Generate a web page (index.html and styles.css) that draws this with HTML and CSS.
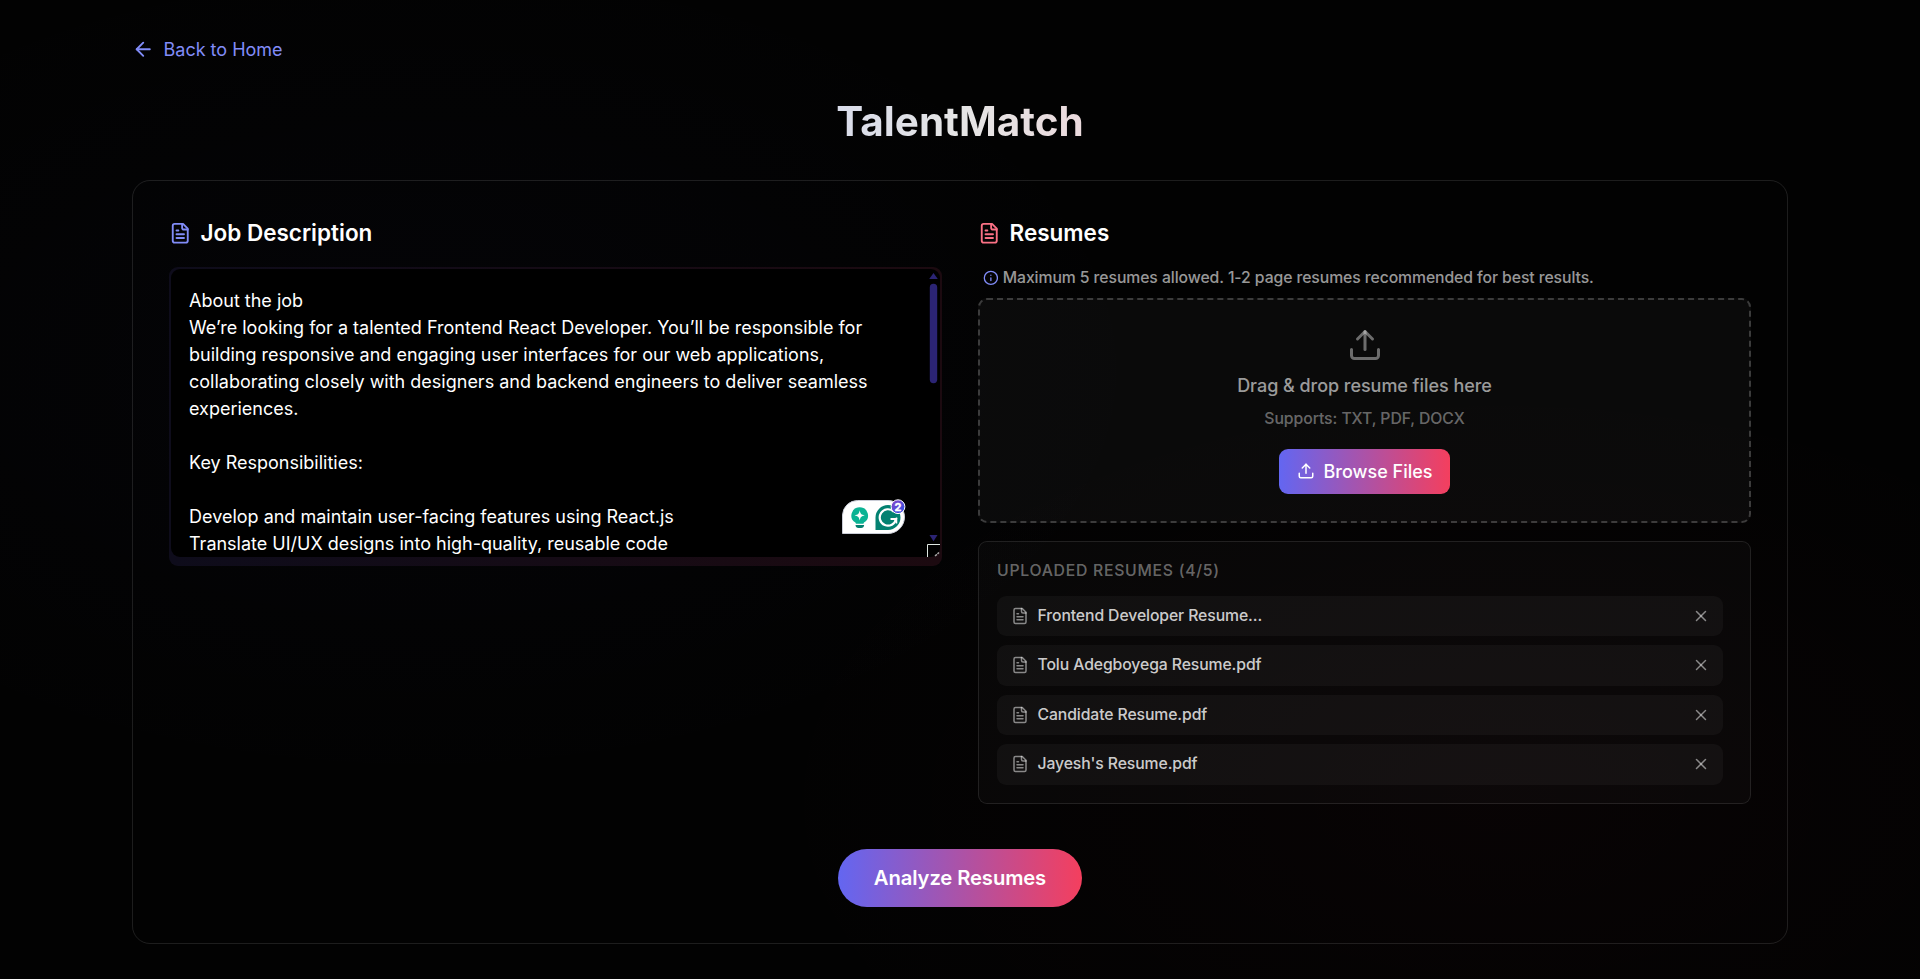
FILE: index.html
```html
<!DOCTYPE html>
<html lang="en">
<head>
<meta charset="utf-8">
<title>TalentMatch</title>
<link rel="stylesheet" href="styles.css">
</head>
<body>
<svg class="defs" width="0" height="0" aria-hidden="true">
  <symbol id="file" viewBox="0 0 24 24"><path d="M15 2H6a2 2 0 0 0-2 2v16a2 2 0 0 0 2 2h12a2 2 0 0 0 2-2V7Z"/><path d="M14 2v4a2 2 0 0 0 2 2h4"/><path d="M10 9H8"/><path d="M16 13H8"/><path d="M16 17H8"/></symbol>
  <symbol id="upload" viewBox="0 0 24 24"><path d="M21 15v4a2 2 0 0 1-2 2H5a2 2 0 0 1-2-2v-4"/><path d="m17 8-5-5-5 5"/><path d="M12 3v12"/></symbol>
  <symbol id="close" viewBox="0 0 24 24"><path d="M18 6 6 18"/><path d="m6 6 12 12"/></symbol>
</svg>
<main class="page">
  <a class="back"><svg class="icon icon-md" viewBox="0 0 24 24"><path d="m12 19-7-7 7-7"/><path d="M19 12H5"/></svg><span>Back to Home</span></a>
  <h1 class="title"><span>TalentMatch</span></h1>
  <section class="card">
    <div class="columns">
      <div class="column">
        <h2 class="heading"><svg class="icon icon-md indigo"><use href="#file"/></svg>Job Description</h2>
        <div class="editor">
          <div class="editor-text">About the job
We’re looking for a talented Frontend React Developer. You’ll be responsible for
building responsive and engaging user interfaces for our web applications,
collaborating closely with designers and backend engineers to deliver seamless
experiences.

Key Responsibilities:

Develop and maintain user-facing features using React.js
Translate UI/UX designs into high-quality, reusable code</div>
          <svg class="scrollbar" width="13" height="288" viewBox="0 0 13 288">
            <path class="bar" d="M2.200 10 6.500 4l4.300 6z"/>
            <rect class="bar" x="2.800" y="14.800" width="7.400" height="99.400" rx="3.700"/>
            <path class="bar" d="M2.500 266h8l-4 6.300z"/>
            <path class="corner" d="M.500 288V275.500H13"/>
            <path class="grip" d="m8 287 4-3.500"/>
          </svg>
          <svg class="assistant" width="66" height="38" viewBox="0 0 66 38">
            <defs><linearGradient id="badge" x1="0" y1="0" x2="1" y2="1"><stop offset="0" stop-color="#8f45c8"/><stop offset="1" stop-color="#2351e5"/></linearGradient></defs>
            <path d="M.500 35.500V17A15 15 0 0 1 15.500 2.500H46A16 16 0 0 1 46 35.500Z" fill="#fff" stroke="#c9ccd6"/>
            <path d="M17.700 9.200a8.300 8.300 0 0 0-4.300 15.400l.6 1.200h7.400l.6-1.200A8.300 8.300 0 0 0 17.700 9.200Z" fill="#0bb394"/>
            <path d="M13.500 27h8.600c0 2-1.300 2.900-3 2.900h-2.600c-1.700 0-3-.9-3-2.900Z" fill="#037f6f"/>
            <path d="M17.700 12.300c.7 3.600 1.500 4.400 5.100 5.100-3.600.7-4.400 1.500-5.100 5.100-.7-3.600-1.500-4.400-5.100-5.100 3.600-.7 4.400-1.500 5.100-5.100Z" fill="#fff"/>
            <path d="M33.500 32V19.500A12.500 12.500 0 1 1 46 32Z" fill="#038171"/>
            <path d="M51.800 13.700A8.200 8.200 0 1 0 54 21h-5.500" fill="none" stroke="#fff" stroke-width="2.200"/>
            <path d="M54.500 19.500v6" fill="none" stroke="#fff" stroke-width="1.500"/>
            <circle cx="56" cy="8.700" r="6.900" fill="url(#badge)" stroke="#fff" stroke-width="1"/>
            <text x="56" y="12.700" text-anchor="middle">2</text>
          </svg>
        </div>
      </div>
      <div class="column">
        <h2 class="heading"><svg class="icon icon-md rose"><use href="#file"/></svg>Resumes</h2>
        <p class="hint"><svg class="icon icon-xs indigo" viewBox="0 0 24 24"><circle cx="12" cy="12" r="10"/><path d="M12 16v-4"/><path d="M12 8h.01"/></svg>Maximum 5 resumes allowed. 1-2 page resumes recommended for best results.</p>
        <div class="dropzone">
          <svg class="icon icon-lg"><use href="#upload"/></svg>
          <p class="drop-title">Drag &amp; drop resume files here</p>
          <p class="drop-note">Supports: TXT, PDF, DOCX</p>
          <button class="browse"><svg class="icon icon-sm"><use href="#upload"/></svg>Browse Files</button>
        </div>
        <div class="uploads">
          <h3 class="uploads-title">UPLOADED RESUMES (4/5)</h3>
          <ul class="files">
            <li class="file"><svg class="icon icon-sm"><use href="#file"/></svg><span class="name">Frontend Developer Resume...</span><svg class="icon icon-sm"><use href="#close"/></svg></li>
            <li class="file"><svg class="icon icon-sm"><use href="#file"/></svg><span class="name">Tolu Adegboyega Resume.pdf</span><svg class="icon icon-sm"><use href="#close"/></svg></li>
            <li class="file"><svg class="icon icon-sm"><use href="#file"/></svg><span class="name">Candidate Resume.pdf</span><svg class="icon icon-sm"><use href="#close"/></svg></li>
            <li class="file"><svg class="icon icon-sm"><use href="#file"/></svg><span class="name">Jayesh's Resume.pdf</span><svg class="icon icon-sm"><use href="#close"/></svg></li>
          </ul>
        </div>
      </div>
    </div>
    <button class="analyze">Analyze Resumes</button>
  </section>
</main>
</body>
</html>
```
FILE: styles.css
```css
html { font-size: 18px; }
*, *::before, *::after { box-sizing: border-box; }
body {
  margin: 0;
  height: 979px;
  overflow: hidden;
  color: #fff;
  font-family: Inter, sans-serif;
  font-size: 1rem;
  line-height: 1.5;
  background:
    radial-gradient(ellipse 760px 430px at 420px 370px, rgba(99, 102, 241, .025), transparent),
    radial-gradient(ellipse 760px 430px at 1500px 800px, rgba(244, 63, 94, .022), transparent),
    #020202;
}
h1, h2, h3, p, ul { margin: 0; padding: 0; }
button { border: 0; color: #fff; font-family: inherit; }
.defs { position: absolute; }
.page { width: 1656px; margin: 0 auto; padding-top: 2rem; }

.icon { flex: none; fill: none; stroke: currentColor; stroke-width: 2; stroke-linecap: round; stroke-linejoin: round; }
.icon-xs { width: 15.75px; height: 15.75px; }
.icon-sm { width: 18px; height: 18px; }
.icon-md { width: 22.5px; height: 22.5px; }
.icon-lg { width: 36px; height: 36px; }
.indigo { color: #818cf8; }
.rose { color: #fb7185; }

.back { display: flex; align-items: center; gap: .5rem; color: #818cf8; }
.title { margin: 2rem 0; text-align: center; font-size: 2.25rem; line-height: 45px; font-weight: 700; }
.title span {
  display: inline-block;
  color: transparent;
  background: linear-gradient(90deg, #d9dcea, #e5e5e5 50%, #ebdadd);
  -webkit-background-clip: text;
  background-clip: text;
}

.card {
  display: flex;
  flex-direction: column;
  align-items: center;
  padding: 2rem;
  border: 1px solid rgba(255, 255, 255, .11);
  border-radius: 1rem;
}
.columns { display: grid; grid-template-columns: 1fr 1fr; gap: 2rem; width: 100%; align-items: start; }
.heading { display: flex; align-items: center; gap: .5rem; margin-bottom: 1rem; font-size: 1.25rem; line-height: 1.75rem; font-weight: 600; }

.editor {
  position: relative;
  padding: 2px 2px 9px;
  border-radius: .5rem;
  background: linear-gradient(90deg, #0e0c1b, #1c0a10);
}
.editor-text { height: 288px; padding: 1rem 1rem 0; overflow: hidden; white-space: pre; border-radius: .5rem; background: #000; }
.scrollbar { position: absolute; top: 2px; right: 2px; }
.bar { fill: #2b2474; }
.corner { fill: none; stroke: #dfe7e2; }
.grip { fill: none; stroke: #aaa; stroke-width: 1.5; stroke-dasharray: 2.5 .8; }
.assistant { position: absolute; right: 34px; bottom: 30px; }
.assistant text { fill: #fff; stroke: #fff; stroke-width: .4; font-size: 11px; font-weight: 700; }

.hint { display: flex; align-items: center; gap: .25rem; margin: 0 0 .5rem .25rem; font-size: .875rem; line-height: 1.25rem; font-weight: 500; letter-spacing: -.08px; color: rgba(255, 255, 255, .6); }
.dropzone {
  display: flex;
  flex-direction: column;
  align-items: center;
  padding: 1.5rem;
  border: 2px dashed rgba(255, 255, 255, .2);
  border-radius: .5rem;
  background: rgba(255, 255, 255, .035);
  color: rgba(255, 255, 255, .4);
}
.drop-title { margin-top: .5rem; font-weight: 500; letter-spacing: -.04px; color: rgba(255, 255, 255, .6); }
.drop-note { margin: .5rem 0 1rem; font-size: .875rem; line-height: 1.25rem; font-weight: 500; letter-spacing: -.06px; }
.browse {
  display: flex;
  align-items: center;
  gap: .5rem;
  padding: .5rem 1rem;
  border-radius: .5rem;
  font-size: 1rem;
  line-height: 1.5;
  font-weight: 500;
  background: linear-gradient(90deg, #6366f1, #f43f5e);
}

.uploads { margin-top: 1rem; padding: 1rem; border: 1px solid rgba(255, 255, 255, .1); border-radius: .5rem; background: rgba(255, 255, 255, .025); }
.uploads-title { margin-bottom: .75rem; font-size: .875rem; line-height: 1.25rem; font-weight: 500; letter-spacing: .74px; color: rgba(255, 255, 255, .4); }
.files { display: grid; gap: .5rem; padding-right: .5rem; list-style: none; }
.file { display: flex; align-items: center; gap: .5rem; padding: .5rem .75rem; border-radius: .5rem; font-size: .875rem; line-height: 1.25rem; font-weight: 500; letter-spacing: -.1px; color: rgba(255, 255, 255, .5); background: rgba(255, 255, 255, .04); }
.name { flex: 1; color: rgba(255, 255, 255, .8); }

.analyze {
  margin-top: 2.5rem;
  padding: .875rem 2rem;
  border-radius: 99px;
  font-size: 1.125rem;
  line-height: 27px;
  font-weight: 600;
  letter-spacing: -.12px;
  background: linear-gradient(90deg, #6366f1, #f43f5e);
}
```
